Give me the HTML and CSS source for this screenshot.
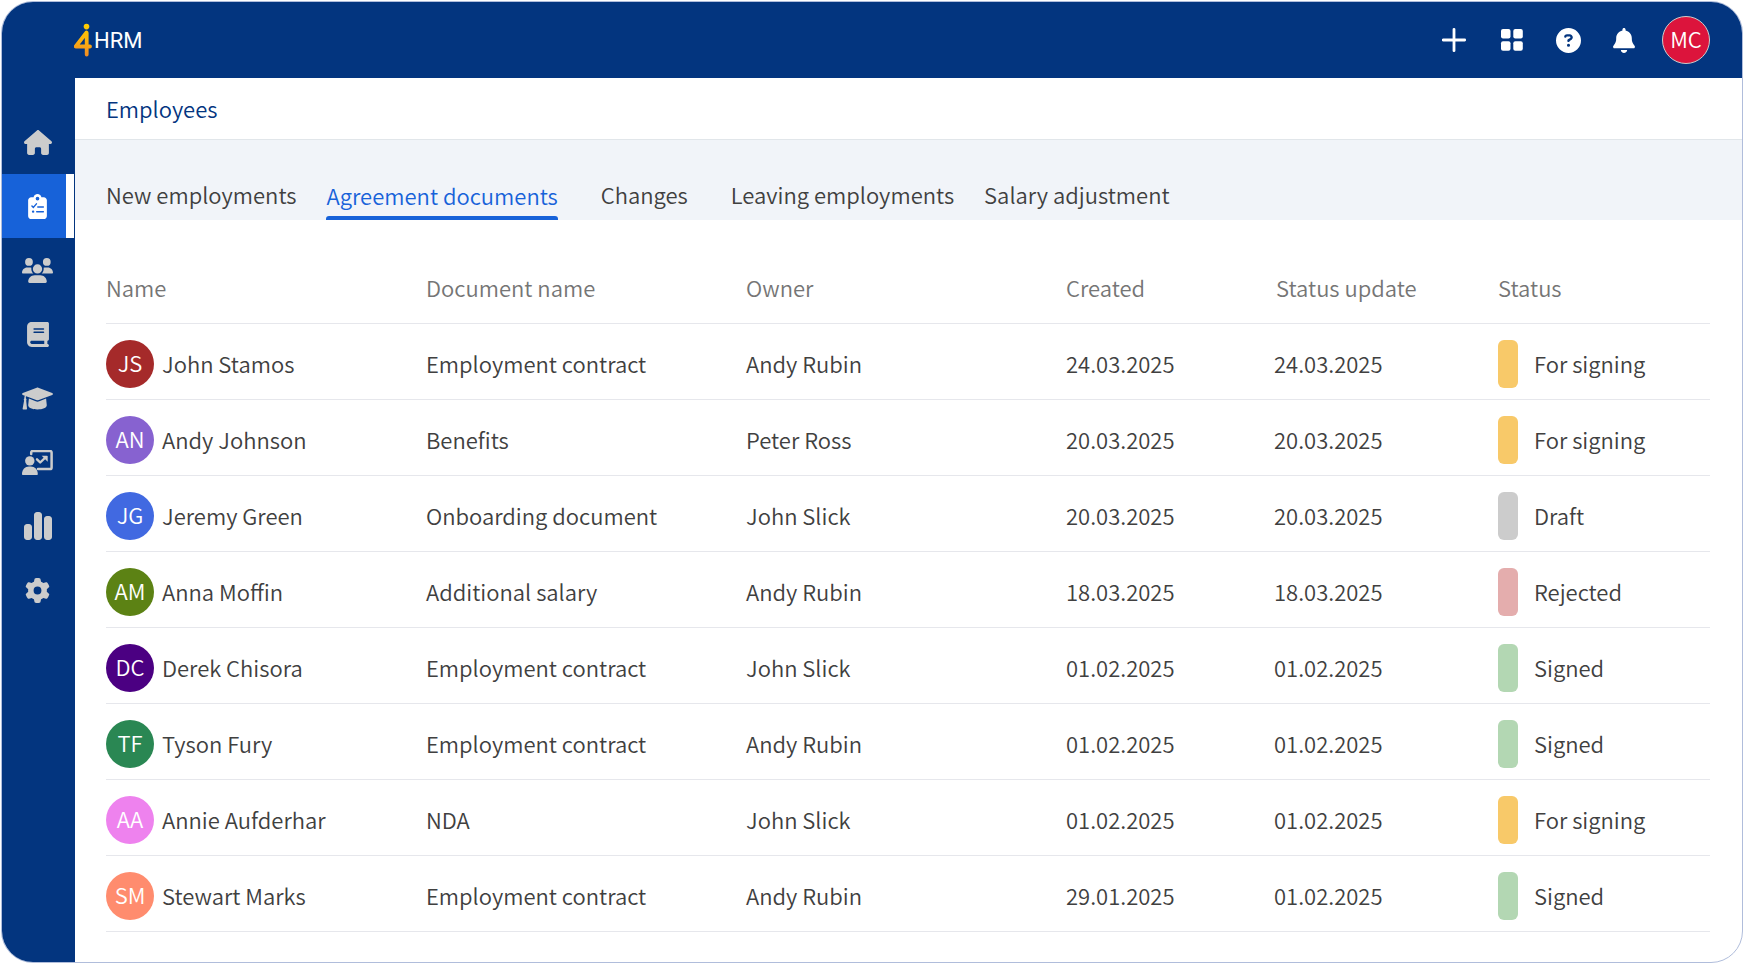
FILE: index.html
```html
<!DOCTYPE html>
<html lang="en">
  <head>
    <meta charset="UTF-8" />
    <meta name="viewport" content="width=device-width, initial-scale=1.0" />
    <title>4HRM - Employees</title>
    <link rel="stylesheet" href="styles.css" />
  </head>
  <body>
    <div class="app">
      <header class="topbar">
        <a href="#" class="logo">
          <svg width="19" height="34" viewBox="0 0 19 34" aria-hidden="true">
            <defs>
              <linearGradient id="logoFill" gradientUnits="userSpaceOnUse" x1="13" y1="0" x2="8" y2="33">
                <stop offset="0" stop-color="#ffd000" />
                <stop offset="0.5" stop-color="#fdb40d" />
                <stop offset="1" stop-color="#f08a24" />
              </linearGradient>
            </defs>
            <circle cx="12.500" cy="3.600" r="2.800" fill="url(#logoFill)" />
            <path d="M12.700 10v21.500M12.500 9.500L1.700 23.500H16" fill="none" stroke="url(#logoFill)" stroke-width="3.800" stroke-linecap="round" stroke-linejoin="round" />
          </svg>
          <span>HRM</span>
        </a>
        <div class="actions">
          <button type="button" class="icon-btn" aria-label="Add">
            <svg width="28" height="28" viewBox="0 0 28 28">
              <path d="M12 3.300v21.400M1.300 14h21.400" fill="none" stroke="currentColor" stroke-width="2.800" stroke-linecap="round" />
            </svg>
          </button>
          <button type="button" class="icon-btn" aria-label="Apps">
            <svg width="28" height="28" viewBox="0 0 28 28">
              <rect x="3" y="3" width="9.500" height="9.500" rx="2" />
              <rect x="15.300" y="3" width="9.500" height="9.500" rx="2" />
              <rect x="3" y="15.300" width="9.500" height="9.500" rx="2" />
              <rect x="15.300" y="15.300" width="9.500" height="9.500" rx="2" />
            </svg>
          </button>
          <button type="button" class="icon-btn" aria-label="Help">
            <svg width="25" height="25" viewBox="0 0 512 512">
              <path d="M256 512A256 256 0 1 0 256 0a256 256 0 1 0 0 512zM169.800 165.300c7.900-22.300 29.100-37.300 52.800-37.300l58.300 0c34.900 0 63.100 28.300 63.100 63.100c0 22.600-12.100 43.500-31.700 54.800L280 264.400c-.2 13-10.900 23.600-24 23.600c-13.300 0-24-10.700-24-24l0-13.500c0-8.600 4.600-16.500 12.100-20.800l44.300-25.400c4.700-2.700 7.600-7.700 7.600-13.100c0-8.400-6.800-15.100-15.100-15.100l-58.300 0c-3.400 0-6.400 2.100-7.500 5.300l-.4 1.200c-4.400 12.500-18.200 19-30.600 14.600s-19-18.200-14.600-30.600l.4-1.200zM224 352a32 32 0 1 1 64 0 32 32 0 1 1 -64 0z" />
            </svg>
          </button>
          <button type="button" class="icon-btn" aria-label="Notifications">
            <svg width="22" height="25" viewBox="0 0 448 512">
              <path d="M224 0c-17.700 0-32 14.300-32 32l0 19.200C119 66 64 130.600 64 208l0 18.800c0 47-17.300 92.400-48.500 127.600l-7.400 8.300c-8.400 9.400-10.400 22.900-5.300 34.400S19.400 416 32 416l384 0c12.600 0 24-7.400 29.200-18.900s3.100-25-5.300-34.400l-7.400-8.300C401.300 319.200 384 273.900 384 226.800l0-18.800c0-77.400-55-142-128-156.800L256 32c0-17.700-14.300-32-32-32zm45.300 493.300c12-12 18.700-28.300 18.700-45.300l-64 0-64 0c0 17 6.700 33.300 18.700 45.300s28.300 18.700 45.300 18.700s33.300-6.700 45.300-18.700z" />
            </svg>
          </button>
          <button type="button" class="avatar avatar-user">MC</button>
        </div>
      </header>

      <div class="layout">
        <nav class="sidebar">
          <a href="#" class="nav-item" aria-label="Home">
            <svg width="28" height="25" viewBox="0 0 576 512">
              <path d="M575.800 255.500c0 18-15 32.100-32 32.100l-32 0 .7 160.200c0 2.700-.2 5.400-.5 8.100l0 16.200c0 22.100-17.900 40-40 40l-16 0c-1.100 0-2.200 0-3.300-.1c-1.400 .1-2.800 .1-4.200 .1L416 512l-24 0c-22.100 0-40-17.900-40-40l0-24 0-64c0-17.700-14.300-32-32-32l-64 0c-17.700 0-32 14.300-32 32l0 64 0 24c0 22.100-17.900 40-40 40l-24 0-31.900 0c-1.500 0-3-.1-4.500-.2c-1.200 .1-2.400 .2-3.600 .2l-16 0c-22.100 0-40-17.900-40-40l0-112c0-.9 0-1.900 .1-2.800l0-69.700-32 0c-18 0-32-14-32-32.100c0-9 3-17 10-24L266.400 8c7-7 15-8 22-8s15 2 21 7L564.800 231.500c8 7 12 15 11 24z" />
            </svg>
          </a>
          <a href="#" class="nav-item active" aria-label="Tasks">
            <svg width="19" height="25" viewBox="0 0 384 512">
              <path fill-rule="evenodd" d="M64 64h48c7-37 40-64 80-64s73 27 80 64h48c35 0 64 29 64 64v320c0 35-29 64-64 64H64c-35 0-64-29-64-64V128c0-35 29-64 64-64zM192 56a38 38 0 1 0 0 76 38 38 0 1 0 0-76z" />
              <g fill="none" stroke="#1762d9" stroke-width="30" stroke-linecap="round" stroke-linejoin="round">
                <path d="M78 246l30 28 62-72M198 268h114M176 362h136" />
                <path d="M100 362h4" stroke-width="46" />
              </g>
            </svg>
          </a>
          <a href="#" class="nav-item" aria-label="People">
            <svg width="31" height="25" viewBox="0 0 640 512">
              <path d="M144 0a80 80 0 1 1 0 160A80 80 0 1 1 144 0zM512 0a80 80 0 1 1 0 160A80 80 0 1 1 512 0zM0 298.700C0 239.800 47.800 192 106.700 192l42.700 0c15.900 0 31 3.500 44.600 9.700c-1.300 7.200-1.900 14.700-1.900 22.300c0 38.200 16.800 72.500 43.300 96c-.2 0-.4 0-.7 0L21.300 320C9.600 320 0 310.400 0 298.700zM405.300 320c-.2 0-.4 0-.7 0c26.600-23.500 43.300-57.800 43.300-96c0-7.600-.7-15-1.900-22.300c13.600-6.300 28.700-9.700 44.600-9.700l42.700 0C592.200 192 640 239.800 640 298.700c0 11.800-9.600 21.300-21.300 21.300l-213.300 0zM224 224a96 96 0 1 1 192 0 96 96 0 1 1 -192 0zM128 485.300C128 411.700 187.700 352 261.300 352l117.300 0C452.300 352 512 411.700 512 485.300c0 14.700-11.900 26.700-26.700 26.700l-330.700 0c-14.700 0-26.700-11.900-26.700-26.700z" />
            </svg>
          </a>
          <a href="#" class="nav-item" aria-label="Handbook">
            <svg width="22" height="25" viewBox="0 0 448 512">
              <path d="M96 0C43 0 0 43 0 96L0 416c0 53 43 96 96 96l288 0 32 0c17.700 0 32-14.300 32-32s-14.300-32-32-32l0-64c17.700 0 32-14.300 32-32l0-320c0-17.700-14.300-32-32-32L384 0 96 0zm0 384l256 0 0 64L96 448c-17.700 0-32-14.300-32-32s14.300-32 32-32zm32-240c0-8.800 7.200-16 16-16l192 0c8.800 0 16 7.200 16 16s-7.200 16-16 16l-192 0c-8.800 0-16-7.200-16-16zm16 48l192 0c8.800 0 16 7.200 16 16s-7.200 16-16 16l-192 0c-8.800 0-16-7.200-16-16s7.200-16 16-16z" />
            </svg>
          </a>
          <a href="#" class="nav-item" aria-label="Training">
            <svg width="31" height="25" viewBox="0 0 31 25">
              <path d="M16.300 1.700L30.200 7c1 .4 1 1.500 0 1.900L16.800 14c-.9.300-1.700.3-2.600 0L.8 8.900c-1-.4-1-1.500 0-1.900L14.700 1.700c.5-.2 1.100-.2 1.600 0z" />
              <path d="M6.900 12.600l6.800 2.700c1.200.5 2.400.5 3.600 0l6.800-2.700.7 6.700c0 2.400-4.100 4.200-9.300 4.200s-9.300-1.800-9.300-4.200z" />
              <path d="M2.900 9.400l1.300.6c-.5.800-.4 1.600-.2 2.500.6.500.7 1.400.2 2l.8 8.300c0 .4-.2.700-.6.700H1.200c-.4 0-.7-.3-.6-.7l1.500-8.300c-.5-.6-.4-1.500.2-2 0-1 .1-2.100.6-3.100z" />
            </svg>
          </a>
          <a href="#" class="nav-item" aria-label="Reviews">
            <svg width="31" height="25" viewBox="0 0 31 25">
              <path d="M9.200 4V2.600A1.600 1.600 0 0 1 10.800 1H28a1.600 1.600 0 0 1 1.600 1.600v14.800A1.600 1.600 0 0 1 28 19H16" fill="none" stroke="currentColor" stroke-width="2.500" stroke-linecap="round" />
              <circle cx="7.800" cy="10.900" r="4.700" />
              <path d="M0 24c0-4.400 3-7.500 7-7.500h1.800c4 0 7 3.100 7 7.500 0 .6-.4 1-1 1H1c-.6 0-1-.4-1-1z" />
              <path d="M15 9.300l3.200 3.200 5.200-5" fill="none" stroke="currentColor" stroke-width="2.400" stroke-linecap="round" stroke-linejoin="round" />
              <path d="M19.700 5.700h5.200c.5 0 .8.300.8.800v5.200z" />
            </svg>
          </a>
          <a href="#" class="nav-item" aria-label="Reports">
            <svg width="28" height="28" viewBox="0 32 448 448">
              <path d="M160 80c0-26.500 21.500-48 48-48l32 0c26.500 0 48 21.500 48 48l0 352c0 26.500-21.500 48-48 48l-32 0c-26.500 0-48-21.500-48-48l0-352zM0 272c0-26.500 21.500-48 48-48l32 0c26.500 0 48 21.500 48 48l0 160c0 26.500-21.500 48-48 48l-32 0c-26.500 0-48-21.500-48-48L0 272zM368 96l32 0c26.500 0 48 21.500 48 48l0 288c0 26.500-21.500 48-48 48l-32 0c-26.500 0-48-21.500-48-48l0-288c0-26.500 21.500-48 48-48z" />
            </svg>
          </a>
          <a href="#" class="nav-item" aria-label="Settings">
            <svg width="25" height="25" viewBox="0 0 512 512">
              <path d="M495.900 166.600c3.200 8.700 .5 18.400-6.400 24.600l-43.300 39.400c1.100 8.300 1.700 16.800 1.700 25.400s-.6 17.100-1.700 25.400l43.300 39.400c6.900 6.200 9.600 15.900 6.400 24.600c-4.400 11.900-9.700 23.300-15.800 34.300l-4.700 8.100c-6.600 11-14 21.400-22.100 31.200c-5.900 7.200-15.700 9.600-24.500 6.800l-55.700-17.700c-13.400 10.300-28.200 18.900-44 25.400l-12.500 57.100c-2 9.100-9 16.300-18.200 17.800c-13.800 2.300-28 3.500-42.500 3.500s-28.700-1.200-42.500-3.500c-9.200-1.500-16.200-8.700-18.200-17.800l-12.500-57.100c-15.800-6.500-30.600-15.100-44-25.400L83.100 425.900c-8.800 2.800-18.600 .3-24.500-6.800c-8.100-9.800-15.500-20.200-22.100-31.200l-4.700-8.100c-6.100-11-11.400-22.400-15.800-34.300c-3.200-8.700-.5-18.400 6.400-24.600l43.300-39.400C64.600 273.100 64 264.600 64 256s.6-17.100 1.700-25.400L22.400 191.200c-6.900-6.200-9.600-15.900-6.400-24.600c4.400-11.900 9.700-23.300 15.800-34.300l4.700-8.100c6.600-11 14-21.400 22.100-31.200c5.900-7.200 15.700-9.600 24.500-6.800l55.700 17.700c13.400-10.300 28.200-18.900 44-25.400l12.500-57.100c2-9.100 9-16.300 18.200-17.800C227.300 1.200 241.500 0 256 0s28.700 1.200 42.500 3.500c9.200 1.500 16.200 8.700 18.200 17.800l12.500 57.100c15.800 6.500 30.600 15.100 44 25.400l55.700-17.700c8.800-2.800 18.600-.3 24.500 6.800c8.100 9.800 15.500 20.200 22.100 31.200l4.700 8.100c6.100 11 11.400 22.400 15.800 34.300zM256 336a80 80 0 1 0 0-160 80 80 0 1 0 0 160z" />
            </svg>
          </a>
        </nav>

        <main class="content">
          <h1 class="page-title">Employees</h1>

          <!-- Tabs -->
          <nav class="tabs">
            <a href="#" class="tab">New employments</a>
            <a href="#" class="tab active">Agreement documents</a>
            <a href="#" class="tab tab-wide">Changes</a>
            <a href="#" class="tab">Leaving employments</a>
            <a href="#" class="tab">Salary adjustment</a>
          </nav>

          <!-- Documents table -->
          <div class="table-wrap">
            <table class="documents">
              <thead>
                <tr>
                  <th class="col-text">Name</th>
                  <th class="col-text">Document name</th>
                  <th class="col-text">Owner</th>
                  <th class="col-created">Created</th>
                  <th class="col-update">Status update</th>
                  <th class="col-status">Status</th>
                </tr>
              </thead>
              <tbody>
                <tr>
                  <td><div class="person"><span class="avatar brown">JS</span>John Stamos</div></td>
                  <td>Employment contract</td>
                  <td>Andy Rubin</td>
                  <td>24.03.2025</td>
                  <td>24.03.2025</td>
                  <td><div class="status signing">For signing</div></td>
                </tr>
                <tr>
                  <td><div class="person"><span class="avatar purple">AN</span>Andy Johnson</div></td>
                  <td>Benefits</td>
                  <td>Peter Ross</td>
                  <td>20.03.2025</td>
                  <td>20.03.2025</td>
                  <td><div class="status signing">For signing</div></td>
                </tr>
                <tr>
                  <td><div class="person"><span class="avatar blue">JG</span>Jeremy Green</div></td>
                  <td>Onboarding document</td>
                  <td>John Slick</td>
                  <td>20.03.2025</td>
                  <td>20.03.2025</td>
                  <td><div class="status draft">Draft</div></td>
                </tr>
                <tr>
                  <td><div class="person"><span class="avatar olive">AM</span>Anna Moffin</div></td>
                  <td>Additional salary</td>
                  <td>Andy Rubin</td>
                  <td>18.03.2025</td>
                  <td>18.03.2025</td>
                  <td><div class="status rejected">Rejected</div></td>
                </tr>
                <tr>
                  <td><div class="person"><span class="avatar indigo">DC</span>Derek Chisora</div></td>
                  <td>Employment contract</td>
                  <td>John Slick</td>
                  <td>01.02.2025</td>
                  <td>01.02.2025</td>
                  <td><div class="status signed">Signed</div></td>
                </tr>
                <tr>
                  <td><div class="person"><span class="avatar green">TF</span>Tyson Fury</div></td>
                  <td>Employment contract</td>
                  <td>Andy Rubin</td>
                  <td>01.02.2025</td>
                  <td>01.02.2025</td>
                  <td><div class="status signed">Signed</div></td>
                </tr>
                <tr>
                  <td><div class="person"><span class="avatar violet">AA</span>Annie Aufderhar</div></td>
                  <td>NDA</td>
                  <td>John Slick</td>
                  <td>01.02.2025</td>
                  <td>01.02.2025</td>
                  <td><div class="status signing">For signing</div></td>
                </tr>
                <tr>
                  <td><div class="person"><span class="avatar salmon">SM</span>Stewart Marks</div></td>
                  <td>Employment contract</td>
                  <td>Andy Rubin</td>
                  <td>29.01.2025</td>
                  <td>01.02.2025</td>
                  <td><div class="status signed">Signed</div></td>
                </tr>
              </tbody>
            </table>
          </div>
        </main>
      </div>
    </div>
  </body>
</html>
```

FILE: styles.css
```css
* {
  box-sizing: border-box;
}

body {
  margin: 0;
  padding: 1px 0 0 1px;
  background-color: #fff;
  color: #404040;
  font-family: "Noto Sans CJK SC", "Noto Sans", sans-serif;
  font-size: 22px;
  font-weight: 350;
  line-height: 32px;
}

a {
  color: inherit;
  text-decoration: none;
}

svg {
  display: block;
  fill: currentColor;
}

.app {
  display: flex;
  flex-direction: column;
  min-height: calc(100vh - 1px);
  border: 1px solid #b0bddb;
  border-radius: 32px;
  overflow: hidden;
}

/* Top bar */
.topbar {
  display: flex;
  justify-content: space-between;
  align-items: center;
  height: 76px;
  padding: 0 32px 0 72px;
  background-color: #03357f;
  color: #fff;
}

.logo {
  display: flex;
  align-items: center;
  gap: 1px;
  font-family: Roboto, sans-serif;
  font-weight: 400;
}

.logo span {
  padding-top: 2px;
}

.actions {
  display: flex;
  align-items: center;
  gap: 28px;
}

.icon-btn {
  display: flex;
  justify-content: center;
  align-items: center;
  width: 28px;
  height: 28px;
  padding: 0;
  border: none;
  background: none;
  color: #fff;
  cursor: pointer;
}

.avatar {
  display: flex;
  justify-content: center;
  align-items: center;
  flex: none;
  width: 48px;
  height: 48px;
  padding: 0 0 4px;
  border-radius: 50%;
  color: #fff;
}

.avatar-user {
  margin-left: -4px;
  border: 1px solid #ccc;
  background-color: #dc143c;
  font: inherit;
  cursor: pointer;
}

/* Sidebar */
.layout {
  display: flex;
  flex: 1;
}

.sidebar {
  flex: none;
  width: 73px;
  padding: 32px 1px 0 0;
  background-color: #03357f;
}

.nav-item {
  display: flex;
  justify-content: center;
  align-items: center;
  height: 64px;
  border-right: 8px solid transparent;
  padding-left: 7px;
  color: #ccc;
}

.nav-item.active {
  border-right-color: #fff;
  background-color: #1762d9;
  background-clip: padding-box;
  color: #fff;
}

/* Content */
.content {
  flex: 1;
  min-width: 0;
}

.page-title {
  margin: 0;
  padding: 14px 31px 15px;
  border-bottom: 1px solid #e1e6ea;
  color: #03357f;
  font-size: 22px;
  font-weight: inherit;
}

.tabs {
  display: flex;
  align-items: flex-end;
  gap: 30px;
  height: 80px;
  padding: 0 31px;
  background-color: #f1f4f9;
}

.tab {
  padding-bottom: 10px;
  white-space: nowrap;
}

.tab-wide {
  padding-left: 13px;
  padding-right: 13px;
}

.tab.active {
  position: relative;
  padding-bottom: 9px;
  color: #1762d9;
}

.tab.active::after {
  content: "";
  position: absolute;
  left: 0;
  right: 0;
  bottom: 0;
  height: 4px;
  border-radius: 3px 3px 0 0;
  background-color: #1762d9;
}

/* Documents table */
.table-wrap {
  padding: 36px 32px 28px 31px;
}

.documents {
  width: 100%;
  table-layout: fixed;
  border-collapse: separate;
  border-spacing: 0;
}

.documents th,
.documents td {
  border-bottom: 1px solid #e6e7ec;
  text-align: left;
}

.documents th {
  padding: 15px 0 20px;
  color: #757575;
  font-weight: inherit;
}

.documents td {
  padding: 16px 0 13px;
}

.documents .col-text {
  width: 320px;
}

.documents .col-created {
  width: 208px;
}

.documents .col-update {
  width: 224px;
  padding-left: 2px;
}

.documents .col-status {
  width: 212px;
}

.person {
  display: flex;
  align-items: center;
  gap: 8px;
  height: 46px;
}

.person .avatar {
  align-self: flex-start;
}

.brown {
  background-color: #a52a2a;
}

.purple {
  background-color: #8762d0;
}

.blue {
  background-color: #4169e1;
}

.olive {
  background-color: #5c8214;
}

.indigo {
  background-color: #4b0082;
}

.green {
  background-color: #2a8753;
}

.violet {
  background-color: #ee82ee;
}

.salmon {
  background-color: #ff8c6e;
}

.status {
  display: flex;
  align-items: center;
  gap: 16px;
  height: 46px;
}

.status::before {
  content: "";
  align-self: flex-start;
  width: 20px;
  height: 48px;
  border-radius: 6px;
  background-color: #ccc;
}

.status.signing::before {
  background-color: #f8c969;
}

.status.rejected::before {
  background-color: #e4adad;
}

.status.signed::before {
  background-color: #b3d7b3;
}
```
